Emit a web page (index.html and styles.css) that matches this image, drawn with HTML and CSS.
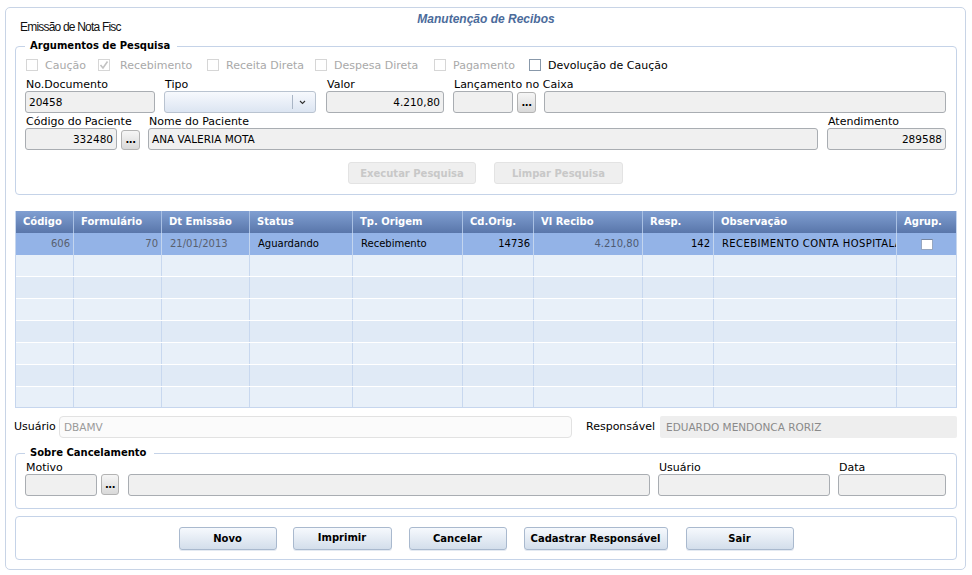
FILE: index.html
```html
<!DOCTYPE html>
<html lang="pt-BR">
<head>
<meta charset="utf-8">
<title>Manutenção de Recibos</title>
<link rel="stylesheet" href="styles.css">
</head>
<body>
<div class="window">
  <div class="header">
    <div class="title">Manutenção de Recibos</div>
    <div class="subtitle">Emissão de Nota Fisc</div>
  </div>

  <div class="group search">
    <div class="legend">Argumentos de Pesquisa</div>
    <div class="checks">
      <div class="chk dis w1"><span class="box"></span>Caução</div>
      <div class="chk dis w2"><span class="box checked"><svg width="10" height="10" viewBox="0 0 10 10"><path d="M1.5 5 L4 8 L8.5 1.5" fill="none" stroke="#c2c2c2" stroke-width="1.6"/></svg></span>Recebimento</div>
      <div class="chk dis w3"><span class="box"></span>Receita Direta</div>
      <div class="chk dis w4"><span class="box"></span>Despesa Direta</div>
      <div class="chk dis w5"><span class="box"></span>Pagamento</div>
      <div class="chk on"><span class="box"></span>Devolução de Caução</div>
    </div>

    <div class="row r1">
      <div class="field fw-doc"><div class="lbl">No.Documento</div><div class="inp">20458</div></div>
      <div class="field fw-tipo"><div class="lbl">Tipo</div>
        <div class="select"><span class="sel-div"></span><svg class="chev" width="7" height="5" viewBox="0 0 7 5"><path d="M1 1 L3.5 3.5 L6 1" fill="none" stroke="#333" stroke-width="1.1"/></svg></div>
      </div>
      <div class="field fw-valor"><div class="lbl">Valor</div><div class="inp right">4.210,80</div></div>
      <div class="field fw-lanc"><div class="lbl">Lançamento no Caixa</div><div class="inp"></div></div>
      <div class="field fw-btn g4"><div class="lbl"></div><div class="dots">...</div></div>
      <div class="field fw-ldesc"><div class="lbl"></div><div class="inp"></div></div>
    </div>

    <div class="row r2">
      <div class="field fw-cod"><div class="lbl">Código do Paciente</div><div class="inp right">332480</div></div>
      <div class="field fw-btn g4b"><div class="lbl"></div><div class="dots dots2">...</div></div>
      <div class="field fw-nome"><div class="lbl">Nome do Paciente</div><div class="inp">ANA VALERIA MOTA</div></div>
      <div class="field fw-atend"><div class="lbl">Atendimento</div><div class="inp right">289588</div></div>
    </div>

    <div class="actions">
      <div class="btn disabled bw-exec">Executar Pesquisa</div>
      <div class="btn disabled bw-limp">Limpar Pesquisa</div>
    </div>
  </div>

  <div class="grid">
    <div class="grow ghead">
      <div class="c">Código</div>
      <div class="c">Formulário</div>
      <div class="c">Dt Emissão</div>
      <div class="c">Status</div>
      <div class="c">Tp. Origem</div>
      <div class="c">Cd.Orig.</div>
      <div class="c">Vl Recibo</div>
      <div class="c">Resp.</div>
      <div class="c">Observação</div>
      <div class="c">Agrup.</div>
    </div>
    <div class="grow gsel">
      <div class="c r gray">606</div>
      <div class="c r gray">70</div>
      <div class="c gray">21/01/2013</div>
      <div class="c">Aguardando</div>
      <div class="c">Recebimento</div>
      <div class="c r">14736</div>
      <div class="c r gray2">4.210,80</div>
      <div class="c r">142</div>
      <div class="c obs">RECEBIMENTO CONTA HOSPITALAR</div>
      <div class="c mid"><span class="gbox"></span></div>
    </div>
    <div class="grow gempty odd"><div class="c"></div><div class="c"></div><div class="c"></div><div class="c"></div><div class="c"></div><div class="c"></div><div class="c"></div><div class="c"></div><div class="c"></div><div class="c"></div></div>
    <div class="grow gempty even"><div class="c"></div><div class="c"></div><div class="c"></div><div class="c"></div><div class="c"></div><div class="c"></div><div class="c"></div><div class="c"></div><div class="c"></div><div class="c"></div></div>
    <div class="grow gempty odd"><div class="c"></div><div class="c"></div><div class="c"></div><div class="c"></div><div class="c"></div><div class="c"></div><div class="c"></div><div class="c"></div><div class="c"></div><div class="c"></div></div>
    <div class="grow gempty even"><div class="c"></div><div class="c"></div><div class="c"></div><div class="c"></div><div class="c"></div><div class="c"></div><div class="c"></div><div class="c"></div><div class="c"></div><div class="c"></div></div>
    <div class="grow gempty odd"><div class="c"></div><div class="c"></div><div class="c"></div><div class="c"></div><div class="c"></div><div class="c"></div><div class="c"></div><div class="c"></div><div class="c"></div><div class="c"></div></div>
    <div class="grow gempty even"><div class="c"></div><div class="c"></div><div class="c"></div><div class="c"></div><div class="c"></div><div class="c"></div><div class="c"></div><div class="c"></div><div class="c"></div><div class="c"></div></div>
    <div class="grow gempty odd"><div class="c"></div><div class="c"></div><div class="c"></div><div class="c"></div><div class="c"></div><div class="c"></div><div class="c"></div><div class="c"></div><div class="c"></div><div class="c"></div></div>
  </div>

  <div class="urow">
    <div class="ulbl">Usuário</div>
    <div class="uinp">DBAMV</div>
    <div class="rlbl">Responsável</div>
    <div class="rinp">EDUARDO MENDONCA RORIZ</div>
  </div>

  <div class="group cancel">
    <div class="legend">Sobre Cancelamento</div>
    <div class="row r3">
      <div class="field fw-mot"><div class="lbl">Motivo</div><div class="inp"></div></div>
      <div class="field fw-btn2 g4"><div class="lbl"></div><div class="dots dots3">...</div></div>
      <div class="field fw-mdesc"><div class="lbl"></div><div class="inp"></div></div>
      <div class="field fw-usu"><div class="lbl">Usuário</div><div class="inp"></div></div>
      <div class="field fw-data"><div class="lbl">Data</div><div class="inp"></div></div>
    </div>
  </div>

  <div class="panel">
    <div class="btn pbtn pw-novo">Novo</div>
    <div class="btn pbtn pw-impr">Imprimir</div>
    <div class="btn pbtn pw-canc">Cancelar</div>
    <div class="btn pbtn pw-cad">Cadastrar Responsável</div>
    <div class="btn pbtn pw-sair">Sair</div>
  </div>
</div>
</body>
</html>
```

FILE: styles.css
```css
* { box-sizing: border-box; }
html, body { margin: 0; padding: 0; background: #ffffff; }
body {
  font-family: "DejaVu Sans", Verdana, sans-serif;
  font-size: 11px;
  color: #000;
}

.window {
  margin: 7px 0 0 5px;
  width: 961px;
  border: 1px solid #c8d4e6;
  border-radius: 5px;
  padding: 0 8px 9px 9px;
}

/* header */
.header { display: grid; height: 38px; }
.title, .subtitle { grid-area: 1 / 1; line-height: 14px; white-space: nowrap; }
.title {
  justify-self: center;
  margin-top: 4px;
  font-family: "Liberation Sans", Arial, sans-serif;
  font-style: italic;
  font-weight: bold;
  font-size: 12px;
  color: #4b6b9b;
}
.subtitle {
  justify-self: start;
  margin-top: 12px;
  margin-left: 5px;
  font-family: "Liberation Sans", Arial, sans-serif;
  font-size: 12px;
  letter-spacing: -0.8px;
  color: #111;
}

/* groups */
.group {
  border: 1px solid #c5d3e8;
  border-radius: 4px;
  padding: 0 10px 10px 9px;
}
.legend {
  display: block;
  width: fit-content;
  margin: -7px 0 0 0;
  padding: 0 7px 0 5px;
  background: #fff;
  font-weight: bold;
  font-size: 10px;
  line-height: 12px;
  white-space: nowrap;
}

/* checkboxes */
.checks {
  display: flex;
  align-items: center;
  height: 14px;
  margin: 6px 0 0 1px;
}
.chk { display: flex; align-items: center; white-space: nowrap; flex: none; }
.chk.dis { color: #a9a9a9; }
.chk .box {
  width: 12px; height: 12px;
  border: 1px solid #d6d6d6;
  background: #fff;
  margin-right: 7px;
  display: flex; align-items: center; justify-content: center;
}
.chk .box.checked { margin-right: 10px; }
.chk.on .box { border-color: #8898aa; }
.w1 { width: 72px; }
.w2 { width: 109px; }
.w3 { width: 108px; }
.w4 { width: 119px; }
.w5 { width: 95px; }

/* fields */
.row { display: flex; }
.r1 { margin-top: 6px; }
.r2 { margin-top: 2px; }
.field { display: flex; flex-direction: column; flex: none; }
.lbl {
  height: 13px;
  line-height: 13px;
  padding-left: 1px;
  white-space: nowrap;
  overflow: visible;
}
.inp {
  height: 22px;
  border: 1px solid #a9adb2;
  border-radius: 3px;
  background: #f0f0f0;
  line-height: 20px;
  padding: 0 3px;
  font-size: 10.5px;
  white-space: nowrap;
  overflow: hidden;
}
.inp.right { text-align: right; }

.fw-doc { width: 130px; }
.fw-tipo { width: 152px; margin-left: 9px; }
.fw-valor { width: 118px; margin-left: 10px; }
.fw-lanc { width: 60px; margin-left: 9px; }
.fw-btn { width: 19px; }
.g4 { margin-left: 4px; }
.g4b { margin-left: 4px; }
.fw-ldesc { width: 402px; margin-left: 8px; }
.fw-cod { width: 92px; }
.fw-nome { width: 670px; margin-left: 8px; }
.fw-atend { width: 119px; margin-left: 9px; }

.dots {
  height: 21px;
  margin-top: 1px;
  border: 1px solid #b3b3b3;
  border-radius: 3px;
  background: linear-gradient(#f6f6f6, #d9d9d9);
  font-weight: bold;
  font-size: 10px;
  line-height: 10px;
  display: flex;
  justify-content: center;
  align-items: flex-end;
  padding-bottom: 4px;
  letter-spacing: -0.5px;
}
.dots2 { height: 20px; margin-top: 2px; }

.select {
  height: 22px;
  border: 1px solid #b9c3d0;
  border-radius: 3px;
  background: linear-gradient(#f7f9fd, #dce5f2);
  display: flex;
  justify-content: flex-end;
  align-items: center;
}
.sel-div { width: 1px; height: 14px; background: #a9b5c5; margin-right: 6px; }
.chev { margin-right: 9px; margin-top: 1px; }

/* search buttons */
.actions {
  display: flex;
  justify-content: center;
  gap: 18px;
  margin-top: 12px;
}
.btn {
  border: 1px solid #a9b9ce;
  border-radius: 3px;
  background: linear-gradient(#f6f9fd, #d3deeb);
  font-weight: bold;
  font-size: 10px;
  display: flex;
  align-items: center;
  justify-content: center;
  white-space: nowrap;
  flex: none;
}
.btn.disabled {
  height: 22px;
  background: #efefef;
  border-color: #e3e3e3;
  color: #c8c8c8;
}
.bw-exec { width: 128px; }
.bw-limp { width: 129px; }

/* grid */
.grid {
  margin-top: 16px;
  height: 197px;
  border: 1px solid #c6d6ee;
  border-top: none;
  overflow: hidden;
}
.grow {
  display: grid;
  grid-template-columns: 58px 88px 88px 103px 110px 71px 109px 71px 183px 59px;
  height: 22px;
}
.grow .c {
  border-right: 1px solid #c8d8ef;
  white-space: nowrap;
  overflow: hidden;
  line-height: 22px;
  padding: 0 3px 0 8px;
}
.grow .c:last-child { border-right: none; }
.ghead {
  background: linear-gradient(#809fd2, #5976aa);
  color: #fff;
  font-weight: bold;
  font-size: 10px;
}
.ghead .c { border-right-color: #a9c0e3; padding-left: 7px; }
.gsel { background: #93b3e7; font-size: 10px; }
.gsel .c { border-right-color: #c3d5ef; }
.gsel .c.r { text-align: right; }
.gsel .c.obs { letter-spacing: 0.4px; padding-right: 0; }
.gsel .gray { color: #59606e; }
.gsel .gray2 { color: #4e5a72; }
.gsel .mid { display: flex; justify-content: center; align-items: center; padding: 0; }
.gbox {
  width: 12px; height: 11px;
  background: #fff;
  border: 1px solid #97a7c0;
  border-top-color: #7585a0;
}
.gempty { border-bottom: 1px solid #ffffff; }
.gempty.odd { background: #e8f0f9; }
.gempty.even { background: #e0eaf6; }

/* usuario / responsavel */
.urow {
  display: flex;
  align-items: center;
  height: 22px;
  margin: 8px 0 0 -1px;
}
.ulbl { width: 45px; flex: none; margin-top: -2px; }
.uinp {
  width: 513px; height: 22px; flex: none;
  border: 1px solid #e2e2e2;
  border-radius: 4px;
  background: #fbfbfb;
  color: #9a9a9a;
  font-size: 10.5px;
  line-height: 20px;
  padding-left: 4px;
}
.rlbl { width: 74px; margin-left: 14px; flex: none; margin-top: -2px; }
.rinp {
  width: 297px; height: 22px; flex: none;
  background: #eeeeee;
  border-radius: 2px;
  color: #8a8a8a;
  font-size: 10.5px;
  line-height: 22px;
  padding-left: 6px;
  white-space: nowrap;
}

/* cancel group */
.cancel { margin-top: 15px; padding-bottom: 12px; }
.r3 { margin-top: 2px; }
.fw-mot { width: 72px; }
.fw-btn2 { width: 18px; }
.dots3 { height: 21px; margin-top: 0; }
.fw-mdesc { width: 522px; margin-left: 9px; }
.fw-usu { width: 172px; margin-left: 8px; }
.fw-data { width: 108px; margin-left: 8px; }

/* bottom panel */
.panel {
  margin-top: 7px;
  border: 1px solid #c5d3e8;
  border-radius: 4px;
  padding: 10px 0 9px;
  display: flex;
  justify-content: center;
  gap: 17px;
}
.pbtn { height: 23px; box-shadow: 0 1px 0 #e4eaf2; }
.pw-novo { width: 98px; }
.pw-impr { width: 99px; margin-left: -1px; padding-bottom: 3px; }
.pw-canc { width: 98px; }
.pw-cad { width: 144px; }
.pw-sair { width: 108px; margin-left: 1px; }
```
